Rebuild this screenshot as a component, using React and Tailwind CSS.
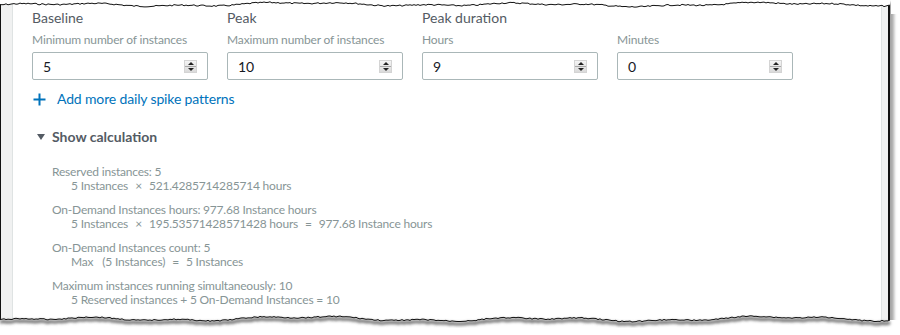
import React from "react";

// torn paper edge, deterministic jitter
const rand = (seed) => {
  let s = seed;
  return () => {
    s = (s * 9301 + 49297) % 233280;
    return s / 233280;
  };
};

const makeEdge = (seed, base, amp, jit) => {
  const r = rand(seed);
  const p1 = r() * 6, p2 = r() * 6, p3 = r() * 6;
  const pts = [];
  for (let x = 0; x <= 890; x += 2) {
    const y =
      base +
      amp * (0.5 * Math.sin(x / 37 + p1) + 0.3 * Math.sin(x / 13 + p2) + 0.2 * Math.sin(x / 83 + p3)) +
      (r() - 0.5) * jit;
    pts.push([x, +y.toFixed(1)]);
  }
  return pts;
};

const topPts = makeEdge(7, 4.5, 2.6, 1.4);
const botPts = makeEdge(31, 11, 3.2, 1.2);
const line = (pts, dy = 0) => pts.map(([x, y], i) => `${i ? "L" : "M"}${x},${y + dy}`).join(" ");

const TopEdge = () => (
  <svg className="absolute top-0 left-0" width="900" height="14">
    <path d={`M0,0 ${line(topPts).replace("M", "L")} L891,0 L900,0 L900,14 L891,14 L891,0 Z`} fill="#fff" />
    <path d={line(topPts)} fill="none" stroke="#111" strokeWidth="1" />
  </svg>
);

const BottomEdge = () => (
  <svg className="absolute left-0 top-[308px]" width="900" height="27">
    <defs>
      <filter id="blur" x="-5%" y="-50%" width="110%" height="200%">
        <feGaussianBlur stdDeviation="1.6" />
      </filter>
    </defs>
    <path d={`${line(botPts)} L900,${botPts[botPts.length - 1][1]} L900,27 L0,27 Z`} fill="#fff" />
    <path d={line(botPts, 2.5)} fill="none" stroke="#6b6b6b" strokeWidth="3" filter="url(#blur)" />
    <path d={`M890,0 L890,${botPts[botPts.length - 1][1] + 2}`} stroke="#888" strokeWidth="3" filter="url(#blur)" />
    <path d={line(botPts)} fill="none" stroke="#111" strokeWidth="1" />
  </svg>
);

const Spinner = () => (
  <div className="w-[13px] h-[13px] flex flex-col bg-gradient-to-b from-[#f4f4f4] to-[#dadada] border border-[#d4d4d4]">
    <div className="flex-1 flex items-center justify-center border-b border-[#a8a8a8]">
      <div className="w-0 h-0 border-l-[3px] border-r-[3px] border-b-[3px] border-l-transparent border-r-transparent border-b-[#222]" />
    </div>
    <div className="flex-1 flex items-center justify-center">
      <div className="w-0 h-0 border-l-[3px] border-r-[3px] border-t-[3px] border-l-transparent border-r-transparent border-t-[#222]" />
    </div>
  </div>
);

const NumberField = ({ value }) => (
  <div className="h-[28px] w-[176px] border border-[#aab7b8] rounded-[2px] bg-white flex items-center justify-between pl-[10px] pr-[10px]">
    <span className="text-[14px] text-[#16191f]">{value}</span>
    <Spinner />
  </div>
);

const fields = [
  { title: "Baseline", sub: "Minimum number of instances", value: "5" },
  { title: "Peak", sub: "Maximum number of instances", value: "10" },
  { title: "Peak duration", sub: "Hours", value: "9" },
  { title: "", sub: "Minutes", value: "0" },
];

const Op = ({ children }) => <span className="mx-[7px]">{children}</span>;

const calc = [
  {
    head: "Reserved instances: 5",
    body: (
      <>
        5 Instances<Op>×</Op>521.4285714285714 hours
      </>
    ),
  },
  {
    head: "On-Demand Instances hours: 977.68 Instance hours",
    body: (
      <>
        5 Instances<Op>×</Op>195.53571428571428 hours<Op>=</Op>977.68 Instance hours
      </>
    ),
  },
  {
    head: "On-Demand Instances count: 5",
    body: (
      <>
        Max<span className="ml-[9px]">(5 Instances)</span>
        <Op>=</Op>5 Instances
      </>
    ),
  },
  {
    head: "Maximum instances running simultaneously: 10",
    body: <>5 Reserved instances + 5 On-Demand Instances = 10</>,
  },
];

export default function App() {
  return (
    <div className="relative w-[900px] h-[335px] bg-white overflow-hidden font-['Lato',sans-serif]">
      <div className="w-[890px] h-[330px] flex bg-white border-l border-r-2 border-[#111] shadow-[4px_0_3px_rgba(0,0,0,0.35)]">
        <div className="w-[12px] bg-[#f0f1f1] border-r border-[#dfe3e3]" />
        <div className="flex-1 pl-[19px] pt-[8px]">
          <div className="grid grid-cols-[176px_176px_176px_176px] gap-x-[19px]">
            {fields.map((f, i) => (
              <div key={i} className="flex flex-col">
                <div className="h-[20px] leading-[20px] text-[14px] text-[#545b64]">{f.title}</div>
                <div className="mt-[4px] h-[16px] leading-[16px] text-[12px] tracking-[-0.15px] text-[#879596]">{f.sub}</div>
                <div className="mt-[4px]">
                  <NumberField value={f.value} />
                </div>
              </div>
            ))}
          </div>

          <div className="mt-[9px] h-[20px] flex items-center text-[#0073bb]">
            <svg width="13" height="13" viewBox="0 0 13 13" className="ml-[1px]">
              <path d="M6.5 0.5v12M0.5 6.5h12" stroke="#0073bb" strokeWidth="2" fill="none" />
            </svg>
            <span className="ml-[11px] text-[14px] tracking-[-0.15px] leading-[20px]">Add more daily spike patterns</span>
          </div>

          <div className="mt-[18px] h-[20px] flex items-center">
            <div className="ml-[5px] w-0 h-0 border-l-[4px] border-r-[4px] border-t-[6px] border-l-transparent border-r-transparent border-t-[#545b64]" />
            <span className="ml-[7px] text-[14px] font-bold text-[#545b64] leading-[20px]">Show calculation</span>
          </div>

          <div className="mt-[18px] ml-[20px] flex flex-col gap-[10px] text-[12px] tracking-[-0.2px] leading-[14px] text-[#879596]">
            {calc.map((c, i) => (
              <div key={i}>
                <div>{c.head}</div>
                <div className="pl-[19px] whitespace-nowrap">{c.body}</div>
              </div>
            ))}
          </div>
        </div>
        <div className="w-[7px] bg-[#f0f1f1] border-l border-[#dfe3e3]" />
      </div>
      <TopEdge />
      <BottomEdge />
    </div>
  );
}
